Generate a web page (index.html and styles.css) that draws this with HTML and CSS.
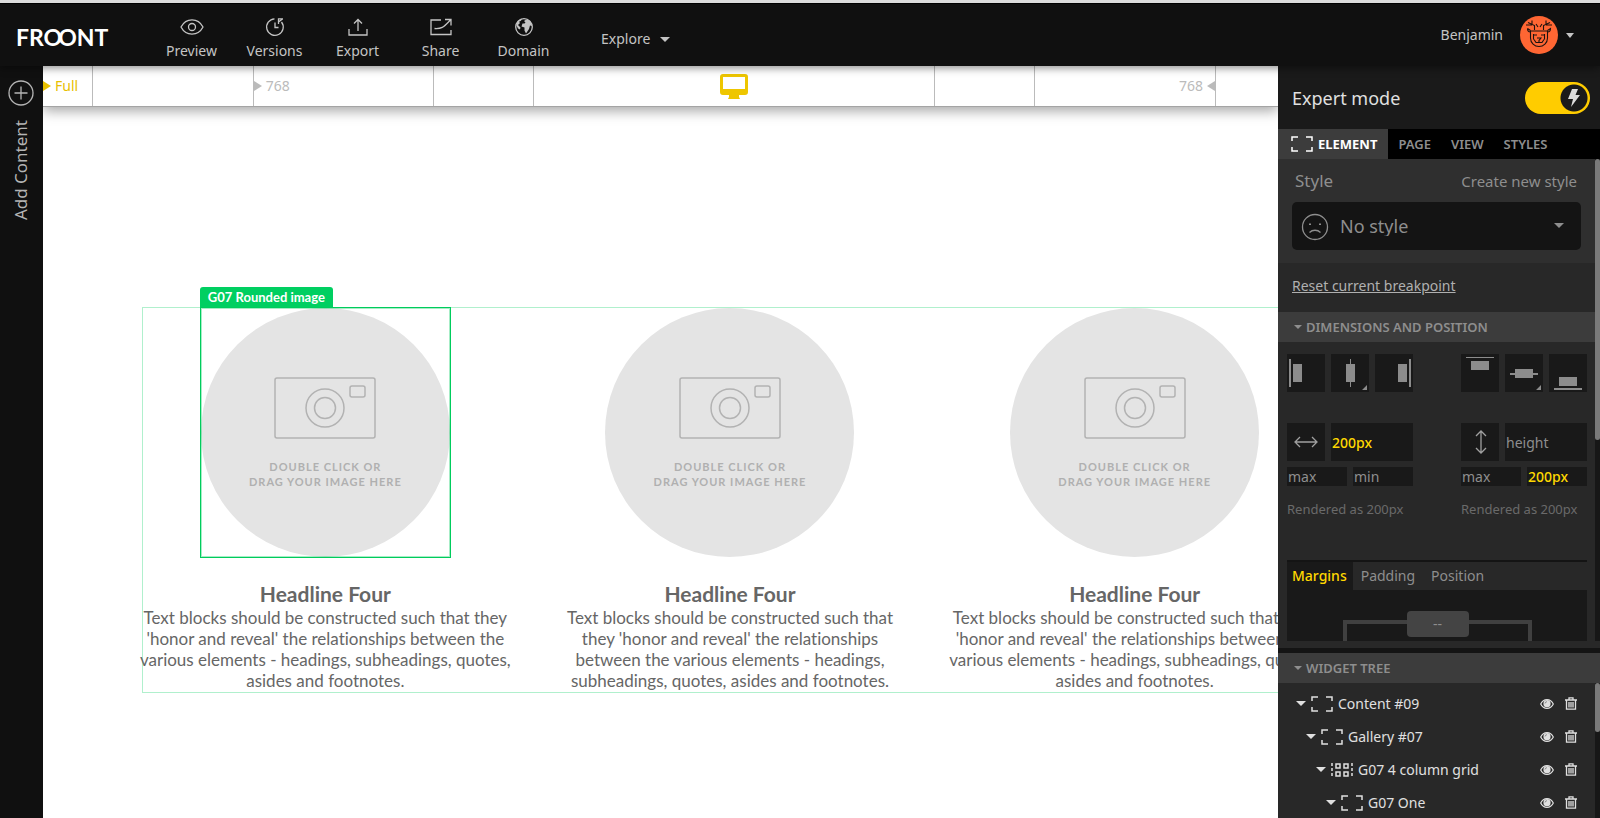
FILE: index.html
```html
<!DOCTYPE html>
<html lang="en">
<head>
	<meta charset="utf-8">
	<meta name="viewport" content="width=device-width, initial-scale=1">
	<title>Froont</title>
	<link rel="stylesheet" href="styles.css">
</head>
<body>
	<!-- shared icons -->
	<svg class="sprite" aria-hidden="true">
		<symbol id="frame" viewBox="0 0 22 16">
			<path d="M1 5V1h6M15 1h6v4M21 11v4h-6M7 15H1v-4" fill="none" stroke="currentColor" stroke-width="1.5"/>
		</symbol>
		<symbol id="grid" viewBox="0 0 22 16">
			<path d="M1 1v15M21 1v15" fill="none" stroke="currentColor" stroke-width="1.5" stroke-dasharray="3 2"/>
			<path d="M5 2h4v4H5zM13 2h4v4h-4zM5 10h4v4H5zM13 10h4v4h-4z" fill="none" stroke="currentColor" stroke-width="1.5"/>
		</symbol>
		<symbol id="eye" viewBox="0 0 14 12">
			<path d="M.7 6C3.500.2 10.500.2 13.300 6 10.500 11.800 3.500 11.800.7 6z" fill="none" stroke="currentColor" stroke-width="1.200"/>
			<circle cx="7" cy="5.700" r="3.600" fill="currentColor"/>
			<path d="M5 5.500A2 2 0 0 1 7 3.700" fill="none" stroke="#777" stroke-width=".8"/>
		</symbol>
		<symbol id="trash" viewBox="0 0 12 13">
			<path d="M0 3h12M4 2.500V.8h4v1.700M1.500 3.500v8.700h9V3.500M4 5v5.500M6 5v5.500M8 5v5.500" fill="none" stroke="currentColor" stroke-width="1.300"/>
		</symbol>
	</svg>

	<header class="topbar">
		<a class="logo" href="#">FRO<span>O</span>NT</a>
		<nav class="tools">
			<button class="tool" type="button">
				<svg width="24" height="18" viewBox="0 0 24 18"><path d="M1 9C6-.5 18-.5 23 9 18 18.500 6 18.500 1 9z"/><circle cx="12" cy="9" r="3.500"/></svg>
				Preview
			</button>
			<button class="tool" type="button">
				<svg width="20" height="20" viewBox="0 0 20 20"><path d="M9.500 1.800A8.300 8.300 0 1 0 16.500 5M10 5.500v5h3.500M13.500 7V1.800H18M13.500 5l4-3"/></svg>
				Versions
			</button>
			<button class="tool" type="button">
				<svg width="20" height="18" viewBox="0 0 20 18"><path d="M1 11v6h18v-6M10 13V1.500M6 5.500l4-4 4 4"/></svg>
				Export
			</button>
			<button class="tool" type="button">
				<svg width="22" height="18" viewBox="0 0 22 18"><path d="M11 2H1v14.500h20V12M4.500 10.500c8 .5 9-1.500 16-8.500M15 1.500h6v6"/></svg>
				Share
			</button>
			<button class="tool" type="button">
				<svg width="20" height="20" viewBox="0 0 20 20"><circle cx="10" cy="10" r="8.300"/><path class="land" d="M3 5c2-2 3-3 5-3.300l-1 2-2 1 1 1.300-2 2 1 1 1.500 1.500-.5 2-2-1-1.500-3zM10 4c2-2 4-2 6 0 1 1 2 3 2 5l-2-.5-1 3.500-3 4.500-1.500-3v-3l-3-1 1-3 2 0 1-1z"/></svg>
				Domain
			</button>
		</nav>
		<button class="explore" type="button">Explore <i class="caret"></i></button>
		<button class="user" type="button">
			<span class="username">Benjamin</span>
			<svg class="avatar" width="38" height="38" viewBox="0 0 38 38">
				<circle cx="19" cy="19" r="19" fill="#ff6633"/>
				<path d="M10 15h18M7.500 12.500c0 3 1 3.500 3 3.500v6c0 5 4 8.500 8.500 8.500s8.500-3.500 8.500-8.500v-6c2 0 3-.5 3-3.500l-3 2M7.500 12.500l3 2M14.500 14V9.500L8 6.500M12 8.500V4.500M6 9h6M23.500 14V9.500l6.500-3M26 8.500V4.500M32 9h-6M16 8l2 3M22 8l-2 3M13.500 18v5.500M24.500 18v5.500M14 19h3M21 19h3M14 23.500l2 3h6l2-3M17 22h4l-2 2.500v2" fill="none" stroke="#1b1210" stroke-width="1.100"/>
			</svg>
			<i class="caret"></i>
		</button>
	</header>

	<div class="workspace">
		<aside class="rail">
			<button class="add" type="button">
				<svg width="26" height="26" viewBox="0 0 26 26"><circle cx="13" cy="13" r="12"/><path d="M13 6.500v13M6.500 13h13"/></svg>
				<span class="add-text">Add Content</span>
			</button>
		</aside>

		<main class="stage">
			<div class="ruler">
				<div class="mark active"><i class="flag"></i>Full</div>
				<div class="mark"></div>
				<div class="mark"><i class="flag"></i>768</div>
				<div class="mark"></div>
				<div class="mark device">
					<svg width="28" height="25" viewBox="0 0 28 25"><path d="M3 0h22a3 3 0 0 1 3 3v15a3 3 0 0 1-3 3h-6v2l1 2H8l1-2v-2H3a3 3 0 0 1-3-3V3a3 3 0 0 1 3-3zm0 3v12h22V3z" fill="#eec600" fill-rule="evenodd"/></svg>
				</div>
				<div class="mark"></div>
				<div class="mark end">768<i class="flag left"></i></div>
				<div class="mark"></div>
			</div>

			<section class="gallery">
				<article class="card">
					<div class="picture selected">
						<span class="tag">G07 Rounded image</span>
						<svg width="102" height="62" viewBox="0 0 102 62"><rect x="1" y="1" width="100" height="60" rx="2"/><circle cx="51" cy="31" r="19"/><circle cx="51" cy="31" r="10.500"/><rect x="76" y="9" width="15" height="11" rx="2"/></svg>
						<p class="hint">DOUBLE CLICK OR<br>DRAG YOUR IMAGE HERE</p>
					</div>
					<h4>Headline Four</h4>
					<p class="copy">Text blocks should be constructed such that they<br>'honor and reveal' the relationships between the<br>various elements - headings, subheadings, quotes,<br>asides and footnotes.</p>
				</article>
				<article class="card">
					<div class="picture">
						<svg width="102" height="62" viewBox="0 0 102 62"><rect x="1" y="1" width="100" height="60" rx="2"/><circle cx="51" cy="31" r="19"/><circle cx="51" cy="31" r="10.500"/><rect x="76" y="9" width="15" height="11" rx="2"/></svg>
						<p class="hint">DOUBLE CLICK OR<br>DRAG YOUR IMAGE HERE</p>
					</div>
					<h4>Headline Four</h4>
					<p class="copy">Text blocks should be constructed such that<br>they 'honor and reveal' the relationships<br>between the various elements - headings,<br>subheadings, quotes, asides and footnotes.</p>
				</article>
				<article class="card">
					<div class="picture">
						<svg width="102" height="62" viewBox="0 0 102 62"><rect x="1" y="1" width="100" height="60" rx="2"/><circle cx="51" cy="31" r="19"/><circle cx="51" cy="31" r="10.500"/><rect x="76" y="9" width="15" height="11" rx="2"/></svg>
						<p class="hint">DOUBLE CLICK OR<br>DRAG YOUR IMAGE HERE</p>
					</div>
					<h4>Headline Four</h4>
					<p class="copy">Text blocks should be constructed such that they<br>'honor and reveal' the relationships between the<br>various elements - headings, subheadings, quotes,<br>asides and footnotes.</p>
				</article>
			</section>
		</main>

		<aside class="panel">
			<div class="expert">
				<label for="expert">Expert mode</label>
				<div class="switch">
					<input id="expert" type="checkbox" checked>
					<svg class="bolt" width="14" height="18" viewBox="0 0 14 18"><path d="M5 0h6L8.500 6H13L4 18l2-8H1z" fill="#ddd"/></svg>
				</div>
			</div>

			<nav class="tabs">
				<button class="tab on" type="button"><svg width="22" height="16"><use href="#frame"/></svg>ELEMENT</button>
				<button class="tab" type="button">PAGE</button>
				<button class="tab" type="button">VIEW</button>
				<button class="tab" type="button">STYLES</button>
			</nav>

			<div class="scroller">
				<div class="props">
					<div class="style-box">
						<div class="style-head">
							<label for="style">Style</label>
							<a href="#">Create new style</a>
						</div>
						<div class="style-select">
							<svg class="face" width="28" height="28" viewBox="0 0 28 28"><circle cx="14" cy="14" r="12.500"/><path d="M8.500 19.500c3-3 8-3 11 0"/><path d="M9 10.500v1.500M19 10.500v1.500" stroke-width="2"/></svg>
							<select id="style"><option>No style</option></select>
							<i class="caret"></i>
						</div>
					</div>
					<div class="reset"><a href="#">Reset current breakpoint</a></div>
					<h2 class="bar"><i class="caret"></i>DIMENSIONS AND POSITION</h2>

					<div class="dims">
						<div class="group">
							<div class="trio">
								<button class="sq" type="button" aria-label="Align left"><svg width="38" height="38"><path d="M2 5h2v28H2zM6 10h9v18H6z"/></svg></button>
								<button class="sq" type="button" aria-label="Align center"><svg width="38" height="38"><path d="M19 5h1v28h-1zM15 10h9v18h-9zM36 31v5h-5z"/></svg></button>
								<button class="sq" type="button" aria-label="Align right"><svg width="38" height="38"><path d="M34 5h2v28h-2zM23 10h9v18h-9z"/></svg></button>
							</div>
							<div class="size">
								<button class="sq" type="button" aria-label="Width"><svg width="38" height="38"><path class="line" d="M9 19h20M13 14l-5 5 5 5M25 14l5 5-5 5"/></svg></button>
								<input class="set" type="text" value="200px" aria-label="Width">
							</div>
							<div class="limits">
								<input type="text" placeholder="max" aria-label="Max width">
								<input type="text" placeholder="min" aria-label="Min width">
							</div>
							<p class="rendered">Rendered as 200px</p>
						</div>
						<div class="group">
							<div class="trio">
								<button class="sq" type="button" aria-label="Align top"><svg width="38" height="38"><path d="M5 3h28v1H5zM10 7h18v9H10z"/></svg></button>
								<button class="sq" type="button" aria-label="Align middle"><svg width="38" height="38"><path d="M5 19h28v2H5zM10 15h18v9H10zM36 31v5h-5z"/></svg></button>
								<button class="sq" type="button" aria-label="Align bottom"><svg width="38" height="38"><path d="M5 34h28v2H5zM10 23h18v9H10z"/></svg></button>
							</div>
							<div class="size">
								<button class="sq" type="button" aria-label="Height"><svg width="38" height="38"><path class="line" d="M20 9v20M15 13l5-5 5 5M15 25l5 5 5-5"/></svg></button>
								<input type="text" placeholder="height" aria-label="Height">
							</div>
							<div class="limits">
								<input type="text" placeholder="max" aria-label="Max height">
								<input class="set" type="text" value="200px" aria-label="Min height">
							</div>
							<p class="rendered">Rendered as 200px</p>
						</div>
					</div>

					<div class="spacing">
						<div class="spacing-tabs">
							<button class="on" type="button">Margins</button>
							<button type="button">Padding</button>
							<button type="button">Position</button>
						</div>
						<div class="spacing-body">
							<div class="edges">
								<button type="button">--</button>
							</div>
						</div>
					</div>
				</div>
				<div class="track"><div class="thumb"></div></div>
			</div>

			<div class="tree">
				<h2 class="bar"><i class="caret"></i>WIDGET TREE</h2>
				<div class="tree-body">
					<ul>
						<li class="node"><i class="caret"></i><svg width="22" height="16"><use href="#frame"/></svg>Content #09
							<span class="acts"><button type="button" aria-label="Hide"><svg width="14" height="12"><use href="#eye"/></svg></button><button type="button" aria-label="Delete"><svg width="12" height="13"><use href="#trash"/></svg></button></span></li>
						<li class="node l1"><i class="caret"></i><svg width="22" height="16"><use href="#frame"/></svg>Gallery #07
							<span class="acts"><button type="button" aria-label="Hide"><svg width="14" height="12"><use href="#eye"/></svg></button><button type="button" aria-label="Delete"><svg width="12" height="13"><use href="#trash"/></svg></button></span></li>
						<li class="node l2"><i class="caret"></i><svg width="22" height="16"><use href="#grid"/></svg>G07 4 column grid
							<span class="acts"><button type="button" aria-label="Hide"><svg width="14" height="12"><use href="#eye"/></svg></button><button type="button" aria-label="Delete"><svg width="12" height="13"><use href="#trash"/></svg></button></span></li>
						<li class="node l3"><i class="caret"></i><svg width="22" height="16"><use href="#frame"/></svg>G07 One
							<span class="acts"><button type="button" aria-label="Hide"><svg width="14" height="12"><use href="#eye"/></svg></button><button type="button" aria-label="Delete"><svg width="12" height="13"><use href="#trash"/></svg></button></span></li>
					</ul>
					<div class="track"><div class="thumb short"></div></div>
				</div>
			</div>
		</aside>
	</div>
</body>
</html>
```
FILE: styles.css
```css
*, *:after, *:before {
	box-sizing: border-box;
}
html, body {
	height: 100%;
}
body {
	margin: 0;
	display: flex;
	flex-direction: column;
	overflow: hidden;
	background: #fff;
	border-top: 3px solid #dcdcdc;
	font-family: "Noto Sans", "Open Sans", sans-serif;
	font-size: 14px;
	line-height: 20px;
}
h2, h4, p, ul {
	margin: 0;
	padding: 0;
}
ul {
	list-style: none;
}
button, input, select {
	font: inherit;
	color: inherit;
	background: none;
	border: 0;
	border-radius: 0;
	padding: 0;
	margin: 0;
}
button {
	cursor: pointer;
}
svg {
	flex: none;
	display: block;
}
.sprite {
	position: absolute;
	width: 0;
	height: 0;
}
.caret {
	flex: none;
	width: 0;
	height: 0;
	border: 5px solid transparent;
	border-top-color: currentColor;
	border-bottom: 0;
}

/* top bar */
.topbar {
	flex: none;
	position: relative;
	z-index: 3;
	height: 63px;
	display: flex;
	align-items: center;
	background: #101010;
	border-top: 1px solid #000;
	color: #c4c4c4;
	box-shadow: 0 2px 8px rgba(0, 0, 0, .45);
}
.logo {
	width: 150px;
	padding: 3px 0 0 16px;
	color: #fff;
	font: bold 23px/30px Lato, sans-serif;
	text-decoration: none;
}
.logo span {
	margin-left: -4px;
}
.tools {
	display: flex;
	padding-top: 8px;
}
.tool {
	width: 83px;
	display: flex;
	flex-direction: column;
	align-items: center;
	gap: 4px;
}
.tool svg {
	height: 20px;
	fill: none;
	stroke: #c4c4c4;
	stroke-width: 1.3;
}
.tool .land {
	fill: #c4c4c4;
	stroke: none;
}
.explore {
	display: flex;
	align-items: center;
	gap: 10px;
	margin-left: 36px;
	padding-top: 8px;
}
.user {
	margin-left: auto;
	padding-right: 26px;
	display: flex;
	align-items: center;
}
.user .caret {
	border-width: 5px 4px 0;
}
.username {
	margin-right: 17px;
}
.avatar {
	margin-right: 8px;
}

/* work area */
.workspace {
	flex: 1;
	min-height: 0;
	display: flex;
}
.rail {
	flex: none;
	width: 43px;
	padding-top: 14px;
	background: #101010;
	color: #b4b4b4;
}
.add {
	width: 42px;
	display: flex;
	flex-direction: column;
	align-items: center;
	gap: 14px;
}
.add svg {
	fill: none;
	stroke: #b4b4b4;
	stroke-width: 1.3;
}
.add-text {
	writing-mode: vertical-rl;
	transform: rotate(180deg);
	font-size: 17px;
}
.stage {
	flex: 1;
	min-width: 0;
	overflow: hidden;
	background: #fff;
}
.ruler {
	height: 41px;
	display: grid;
	grid-template-columns: 50fr 161fr 180fr 100fr 402fr 100fr 181fr 62fr;
	border-bottom: 1px solid #a4a4a4;
	box-shadow: 0 4px 12px rgba(0, 0, 0, .35);
}
.mark {
	display: flex;
	align-items: center;
	gap: 4px;
	border-right: 1px solid #bbb;
	color: #bbb;
}
.mark:last-child {
	border: 0;
}
.mark.active {
	color: #e8c000;
}
.mark.device {
	justify-content: center;
}
.mark.end {
	justify-content: flex-end;
}
.flag {
	border: 5px solid transparent;
	border-left: 8px solid currentColor;
	border-right: 0;
}
.flag.left {
	border-left: 0;
	border-right: 8px solid currentColor;
}

.gallery {
	margin: 200px -40px 0 99px;
	height: 386px;
	display: grid;
	grid-template-columns: repeat(3, 1fr);
	gap: 40px;
	border: 1px solid #b0f0cd;
	color: #666;
	font-family: Lato, sans-serif;
	font-variant-ligatures: none;
	text-align: center;
}
.picture {
	position: relative;
	width: 249px;
	height: 249px;
	margin: 0 auto;
	padding-top: 69px;
	display: flex;
	flex-direction: column;
	align-items: center;
	border-radius: 50%;
	background: #e4e4e4;
}
.picture svg {
	fill: none;
	stroke: #b2b2b2;
	stroke-width: 1.5;
}
.picture.selected:after {
	content: "";
	position: absolute;
	inset: -1px;
	border: 1px solid #00cc5c;
	box-shadow: inset 0 0 0 1px rgba(0, 204, 92, .35);
}
.tag {
	position: absolute;
	left: -1px;
	bottom: 249px;
	padding: 0 8px;
	background: #00cf61;
	border-radius: 3px 3px 0 0;
	color: #fff;
	font-size: 13px;
	font-weight: bold;
	line-height: 21px;
	white-space: nowrap;
}
.hint {
	margin-top: 20px;
	color: #b0b0b0;
	font-size: 11px;
	font-weight: bold;
	line-height: 15px;
	letter-spacing: 1px;
}
.card h4 {
	margin-top: 24px;
	font-size: 21px;
	line-height: 26px;
}
.copy {
	margin: 0 -20px;
	font-size: 17px;
	line-height: 21px;
	white-space: nowrap;
}

/* right panel */
.panel {
	flex: none;
	width: 322px;
	display: flex;
	flex-direction: column;
	background: #282828;
	color: #8e8e8e;
}
.expert {
	flex: none;
	height: 63px;
	padding: 0 10px 0 14px;
	display: flex;
	align-items: center;
	justify-content: space-between;
	background: #1a1a1a;
	color: #e0e0e0;
	font-size: 18px;
}
.switch {
	position: relative;
	display: flex;
}
.switch input {
	appearance: none;
	width: 65px;
	height: 32px;
	border-radius: 16px;
	background: radial-gradient(circle at 49px 16px, #1a1a1a 13px, #ffcc00 14px);
}
.bolt {
	position: absolute;
	right: 9px;
	top: 7px;
	pointer-events: none;
}
.tabs {
	flex: none;
	height: 30px;
	display: flex;
	background: #000;
	font-size: 13px;
	font-weight: 600;
}
.tab {
	display: flex;
	align-items: center;
	gap: 5px;
	padding: 0 10px;
}
.tab.on {
	padding: 0 11px 0 13px;
	background: #3c3c3c;
	color: #fff;
	font-weight: bold;
}
.scroller {
	flex: 1;
	min-height: 0;
	display: flex;
	overflow: hidden;
	border-bottom: 7px solid #282828;
}
.props {
	flex: 1;
	overflow: hidden;
}
.track {
	flex: none;
	width: 5px;
	background: #171717;
}
.thumb {
	height: 281px;
	border-radius: 3px;
	background: #7a7a7a;
}
.thumb.short {
	height: 49px;
}
.style-box {
	height: 104px;
	padding: 12px 14px 0;
	background: #2f2f2f;
}
.style-head {
	display: flex;
	justify-content: space-between;
	padding: 0 4px 0 3px;
	font-size: 15px;
}
.style-head label {
	font-size: 17px;
}
.style-head a {
	color: inherit;
	text-decoration: none;
}
.style-select {
	position: relative;
	margin-top: 11px;
}
.style-select select {
	appearance: none;
	display: block;
	width: 100%;
	height: 48px;
	padding-left: 48px;
	border-radius: 5px;
	background: #141414;
	font-size: 18px;
}
.face {
	position: absolute;
	left: 9px;
	top: 11px;
	fill: none;
	stroke: #8e8e8e;
	stroke-width: 1.3;
}
.style-select .caret {
	position: absolute;
	right: 17px;
	top: 21px;
}
.reset {
	height: 49px;
	padding: 13px 14px;
}
.reset a {
	color: #b0b0b0;
}
.bar {
	height: 30px;
	padding-left: 16px;
	display: flex;
	align-items: center;
	gap: 4px;
	background: #3c3c3c;
	font-size: 13px;
	font-weight: 600;
}
.bar .caret {
	border-width: 4px 4px 0;
}
.dims {
	display: flex;
	justify-content: space-between;
	padding: 12px 8px 0 9px;
}
.group {
	width: 126px;
}
.trio, .size, .limits {
	display: flex;
	gap: 6px;
}
.sq {
	width: 38px;
	height: 38px;
	background: #191919;
}
.sq svg {
	fill: #8c8c8c;
}
.sq .line {
	fill: none;
	stroke: #a0a0a0;
	stroke-width: 1.3;
}
.size {
	margin-top: 31px;
}
.dims input {
	flex: 1;
	min-width: 0;
	padding-left: 1px;
	background: #191919;
	color: #ffd800;
	font-weight: 500;
}
.size input {
	padding-top: 2px;
}
.dims input::placeholder {
	color: #8e8e8e;
	opacity: 1;
	font-weight: normal;
}
.limits {
	height: 19px;
	margin-top: 6px;
}
.rendered {
	margin-top: 13px;
	color: #6a6a6a;
	font-size: 13px;
}
.spacing {
	margin: 41px 8px 0 9px;
	background: #191919;
	border-top: 2px solid #141414;
}
.spacing-tabs {
	display: flex;
	height: 28px;
	background: #282828;
}
.spacing-tabs button {
	padding: 0 8px;
}
.spacing-tabs .on {
	padding: 0 6px 0 5px;
	background: #191919;
	color: #ffd800;
	font-weight: 500;
}
.spacing-body {
	height: 180px;
	padding: 30px 55px 0 56px;
}
.edges {
	height: 130px;
	display: flex;
	justify-content: center;
	align-items: flex-start;
	border: 4px solid #404040;
}
.edges button {
	width: 62px;
	height: 26px;
	margin-top: -13px;
	border-radius: 4px;
	background: #444;
}

/* widget tree */
.tree {
	flex: none;
	border-top: 5px solid #141414;
}
.tree-body {
	display: flex;
	height: 135px;
}
.tree ul {
	flex: 1;
	padding-top: 4px;
	color: #e0e0e0;
}
.node {
	height: 33px;
	padding: 0 18px 0 18px;
	display: flex;
	align-items: center;
	gap: 5px;
}
.l1 {
	padding-left: 28px;
}
.l2 {
	padding-left: 38px;
}
.l3 {
	padding-left: 48px;
}
.acts {
	margin-left: auto;
	display: flex;
	gap: 11px;
}
```
